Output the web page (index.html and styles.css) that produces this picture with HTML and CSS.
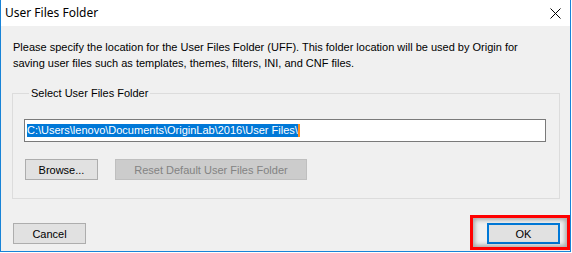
FILE: index.html
```html
<!DOCTYPE html>
<html>
<head>
<meta charset="utf-8">
<link rel="stylesheet" href="styles.css">
</head>
<body>
<div class="window">
  <div class="titlebar">
    <span class="title">User Files Folder</span>
    <svg class="close" width="11" height="11" viewBox="0 0 11 11"><path d="M0.5 0.5 L10.5 10.5 M10.5 0.5 L0.5 10.5" stroke="#000" stroke-width="1" fill="none"/></svg>
  </div>
  <div class="content">
    <p class="intro">Please specify the location for the User Files Folder (UFF). This folder location will be used by Origin for<br>saving user files such as templates, themes, filters, INI, and CNF files.</p>
    <fieldset class="group">
      <legend class="legend">Select User Files Folder</legend>
      <div class="pathbox"><span class="sel">C:\Users\lenovo\Documents\OriginLab\2016\User Files\</span><span class="caret"></span></div>
      <div class="btnrow">
        <button class="btn browse">Browse...</button>
        <button class="btn reset" disabled>Reset Default User Files Folder</button>
      </div>
    </fieldset>
    <div class="footer">
      <button class="btn cancel">Cancel</button>
      <div class="okwrap">
        <button class="btn ok">OK</button>
        <div class="highlight"></div>
      </div>
    </div>
  </div>
</div>
</body>
</html>
```

FILE: styles.css
```css
html, body {
  margin: 0;
  padding: 0;
  background: #ffffff;
}
.window {
  width: 571px;
  height: 252px;
  box-sizing: border-box;
  border: 1px solid #1883d7;
  border-top: none;
  background: #f0f0f0;
  display: flex;
  flex-direction: column;
}
.titlebar {
  height: 26px;
  background: #ffffff;
  display: flex;
  align-items: center;
  justify-content: space-between;
  padding: 0 9px 0 4px;
  flex: none;
}
.title {
  font-family: "Noto Sans", sans-serif;
  font-size: 12px;
  color: #000;
  line-height: 26px;
}
.close {
  display: block;
  margin-top: 1px;
}
.content {
  padding: 13px 11px 0 11px;
  font-family: "Liberation Sans", Arial, sans-serif;
  font-size: 11px;
  color: #000;
  position: relative;
  flex: 1;
}
.intro {
  margin: 0 0 0 1px;
  line-height: 16px;
}
.group {
  margin: 16px 0 0 0;
  width: 548px;
  box-sizing: border-box;
  border: 1px solid #dcdcdc;
  padding: 19px 12px 18px 11px;
}
.legend {
  padding: 0 2px;
  margin-left: 5px;
  line-height: 13px;
}
.pathbox {
  width: 522px;
  height: 23px;
  box-sizing: border-box;
  border: 1px solid #7a7a7a;
  background: #fff;
  display: flex;
  align-items: center;
  padding-left: 2px;
}
.sel {
  background: #0078d7;
  color: #fff;
  line-height: 13px;
  height: 13px;
}
.caret {
  width: 2px;
  height: 13px;
  background: #ff8c1a;
}
.btnrow {
  display: flex;
  gap: 17px;
  margin-top: 17px;
  padding-left: 1px;
}
.btn {
  height: 21px;
  box-sizing: border-box;
  border: 1px solid #adadad;
  background: #e1e1e1;
  font-family: "Liberation Sans", Arial, sans-serif;
  font-size: 11px;
  color: #000;
  padding: 0;
  margin: 0;
}
.browse { width: 73px; }
.reset {
  width: 192px;
  background: #cccccc;
  border-color: #bfbfbf;
  color: #838383;
}
.footer {
  display: flex;
  justify-content: space-between;
  align-items: flex-start;
  margin-top: 24px;
  width: 548px;
}
.cancel {
  width: 73px;
  margin-left: 1px;
}
.okwrap {
  position: relative;
}
.ok {
  width: 73px;
  display: block;
  border: 2px solid #0078d7;
}
.highlight {
  position: absolute;
  left: -17px;
  top: -8px;
  width: 100px;
  height: 35px;
  box-sizing: border-box;
  border: 3px solid #ff0000;
  box-shadow: inset 0 0 4px 2px rgba(0,0,0,0.3);
}
```
